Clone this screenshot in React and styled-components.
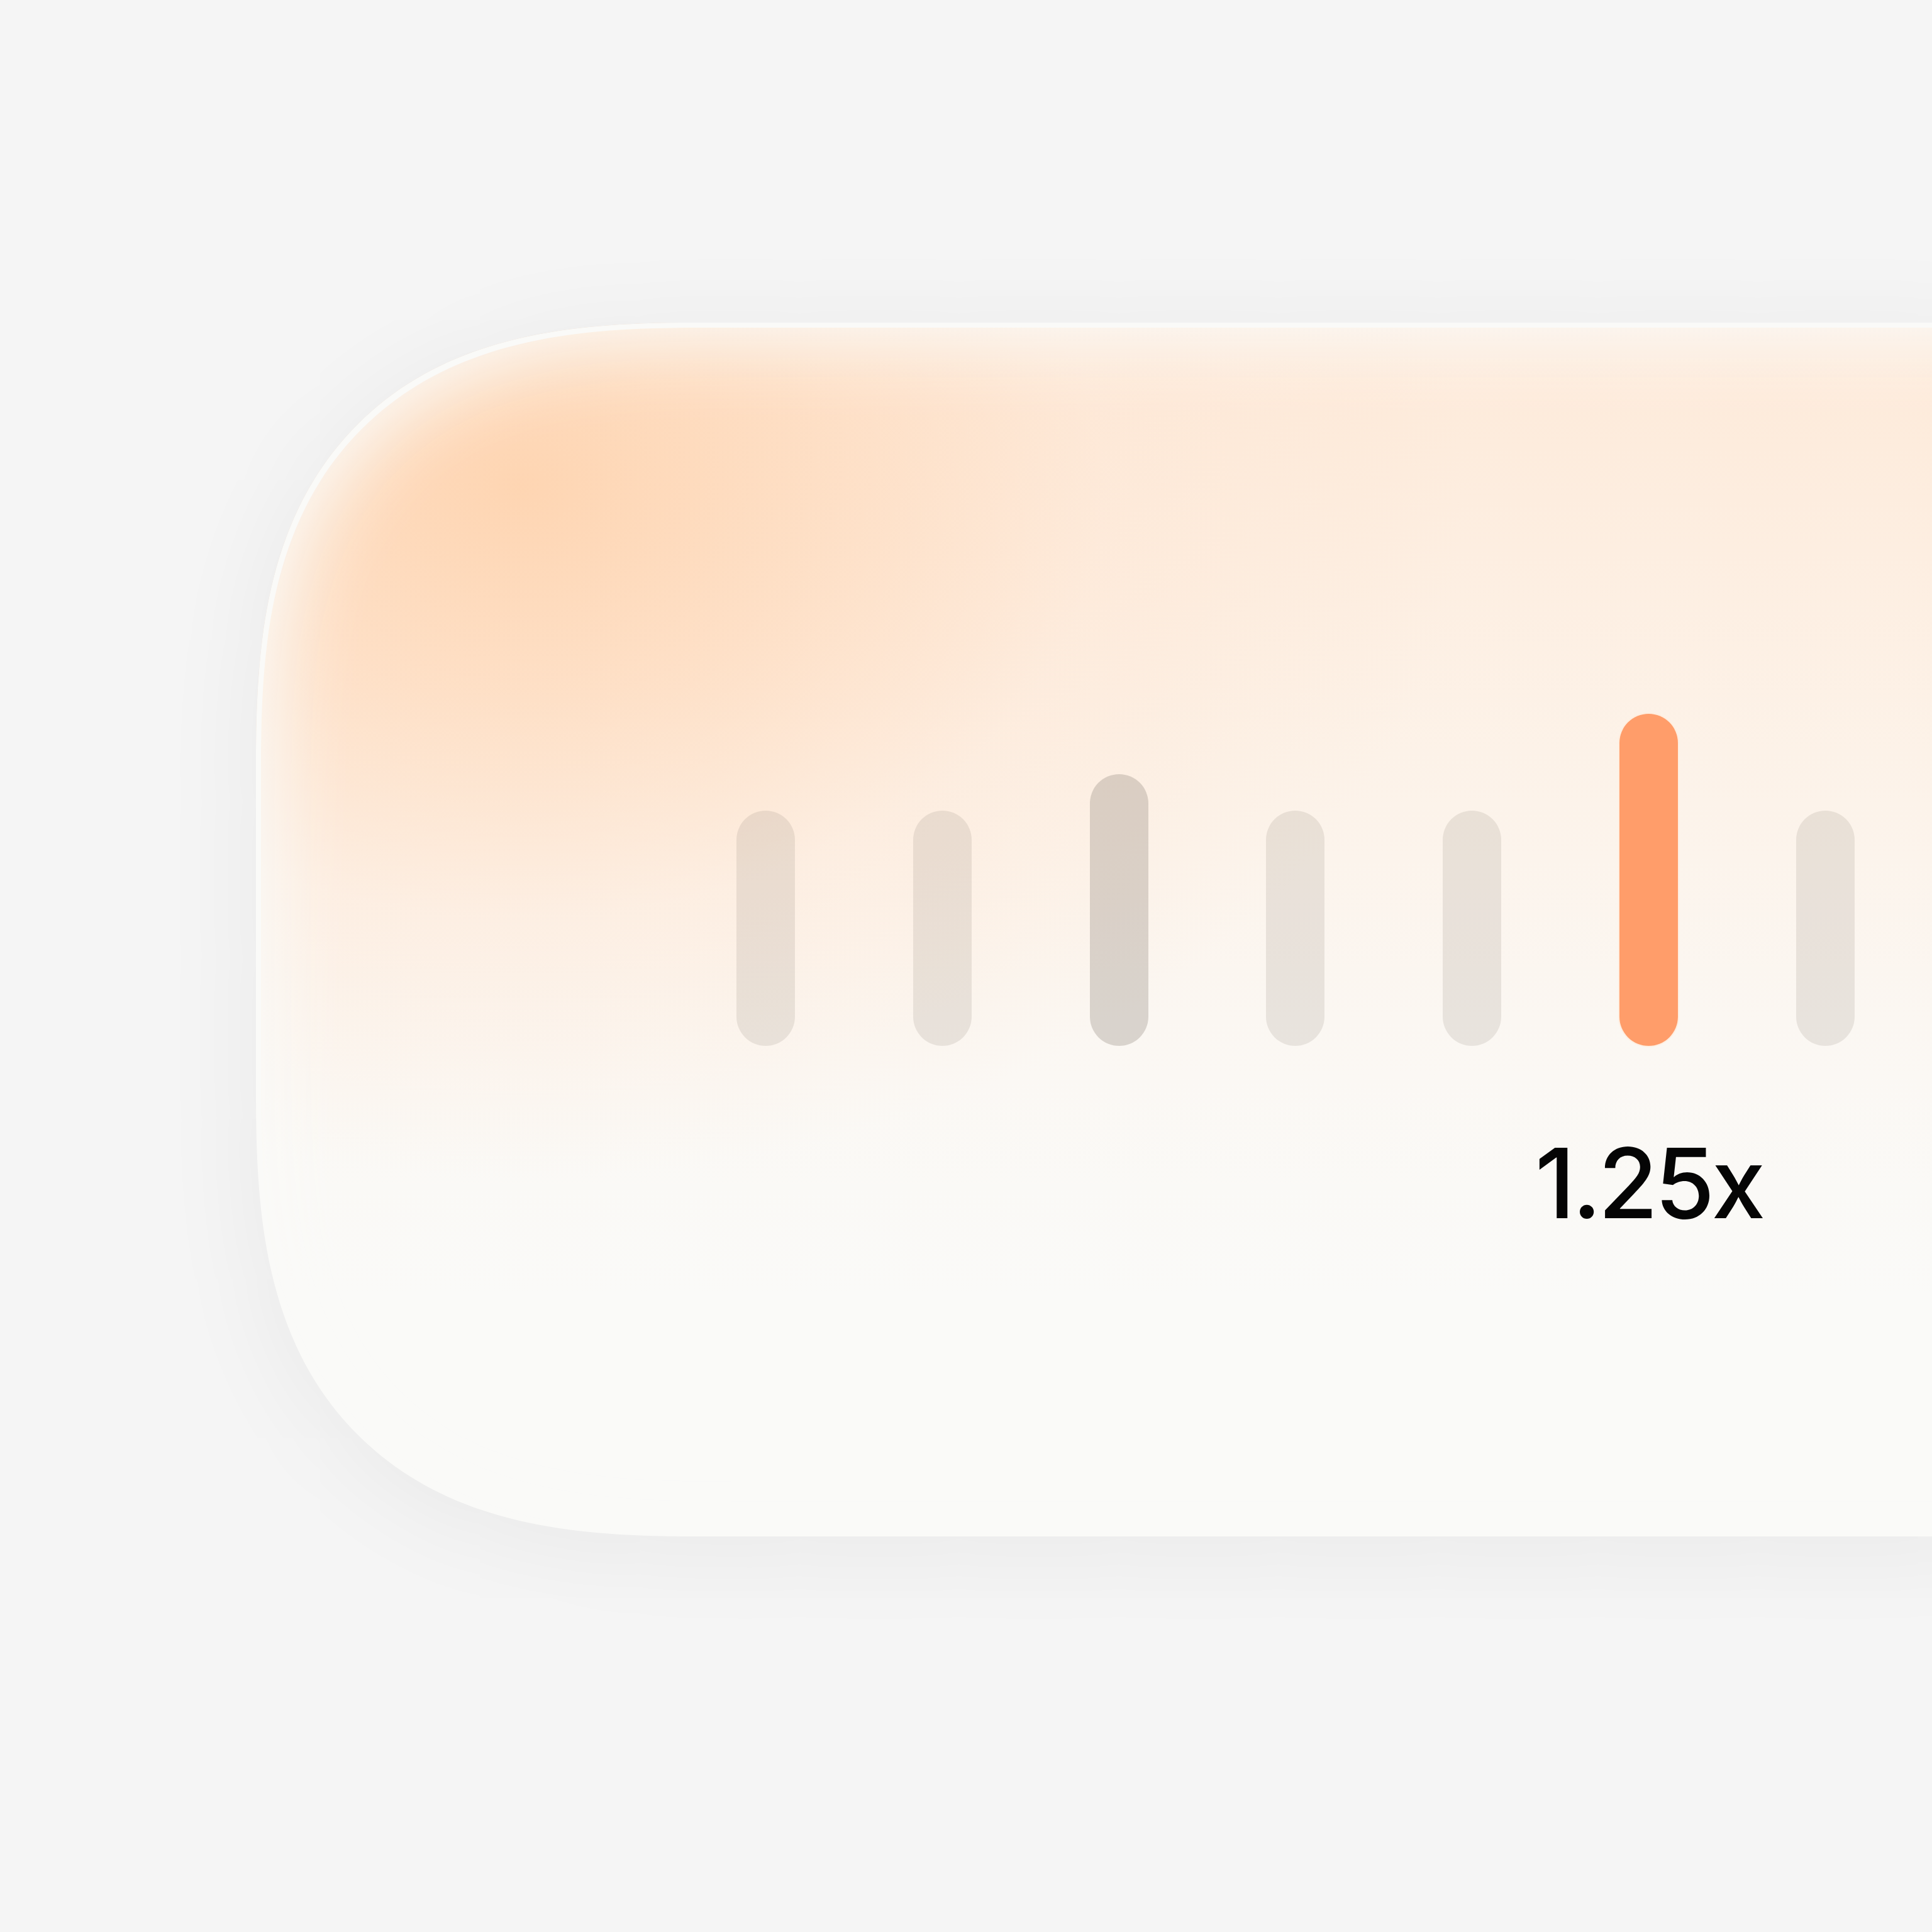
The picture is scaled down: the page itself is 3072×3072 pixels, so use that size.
import React from "react";
import styled, { createGlobalStyle } from "styled-components";

const Global = createGlobalStyle`
  html, body {
    margin: 0;
    padding: 0;
    background: #f5f5f5;
  }
  #root {
    width: 3072px;
    height: 3072px;
    overflow: hidden;
  }
`;

const Page = styled.main`
  box-sizing: border-box;
  width: 3072px;
  height: 3072px;
  padding: 513px 0 0 407px;
  background: #f5f5f5;
  overflow: hidden;
`;

const Card = styled.section`
  box-sizing: border-box;
  width: 3800px;
  height: 1930px;
  border-radius: 540px;
  padding: 622px 0 0 764px;
  background:
    radial-gradient(
      ellipse 1500px 1100px at 420px 260px,
      rgba(254, 212, 176, 0.95) 0%,
      rgba(254, 218, 188, 0.72) 32%,
      rgba(254, 228, 208, 0.38) 62%,
      rgba(255, 240, 228, 0) 100%
    ),
    linear-gradient(
      to bottom,
      rgba(255, 228, 206, 0.75) 0%,
      rgba(255, 234, 216, 0.5) 35%,
      rgba(255, 240, 228, 0.2) 62%,
      rgba(250, 250, 248, 0) 80%
    ),
    #fafaf8;
  box-shadow:
    inset 0 0 0 8px #fafaf8,
    inset 0 0 120px 30px #fafaf8,
    0 20px 170px rgba(0, 0, 0, 0.055);

  @supports (corner-shape: superellipse(1.4)) {
    border-radius: 700px;
    corner-shape: superellipse(1.4);
  }
`;

const Ticks = styled.div`
  display: grid;
  grid-template-columns: repeat(7, 93px);
  grid-template-rows: auto auto;
  column-gap: 187.8px;
`;

const Tick = styled.div`
  grid-row: 1;
  align-self: end;
  width: 93px;
  height: ${(p) => p.$h}px;
  border-radius: 47px;
  background: ${(p) =>
    p.$active
      ? "#ff9d6a"
      : p.$major
      ? "rgba(140, 128, 120, 0.3)"
      : "rgba(140, 128, 120, 0.17)"};
  box-shadow: ${(p) =>
    p.$active ? "0 0 0 2px rgba(255, 236, 220, 0.8)" : "none"};
`;

const Label = styled.div`
  grid-row: 2;
  grid-column: ${(p) => p.$col - 1} / span 3;
  justify-self: center;
  margin-top: 141px;
  font-family: Inter, "Noto Sans", sans-serif;
  font-weight: 500;
  font-size: 154px;
  line-height: 1;
  color: #050505;
  white-space: nowrap;
  letter-spacing: -5px;
`;

const ticks = [
  { h: 374 },
  { h: 374 },
  { h: 432, major: true },
  { h: 374 },
  { h: 374 },
  { h: 528, active: true },
  { h: 374 },
];

export default function App() {
  const activeIndex = ticks.findIndex((t) => t.active);
  return (
    <>
      <Global />
      <Page>
        <Card>
          <Ticks>
            {ticks.map((t, i) => (
              <Tick key={i} $h={t.h} $major={t.major} $active={t.active} />
            ))}
            <Label $col={activeIndex + 1}>1.25x</Label>
          </Ticks>
        </Card>
      </Page>
    </>
  );
}
